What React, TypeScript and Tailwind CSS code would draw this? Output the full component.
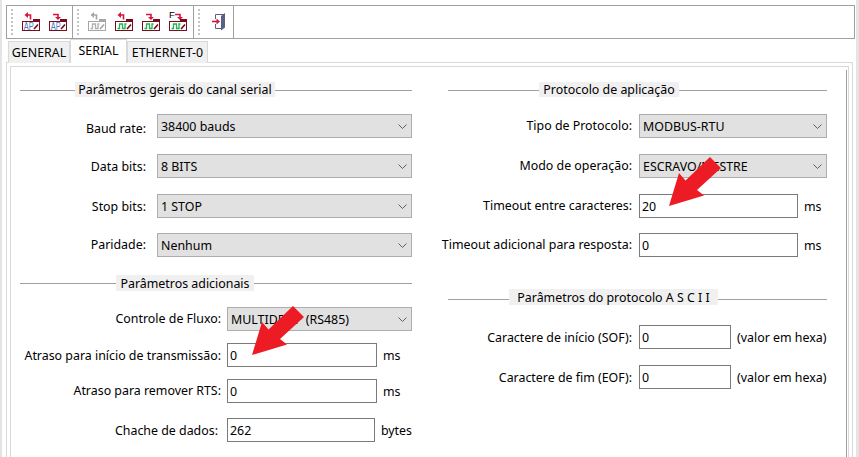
import React from 'react';

const RED = '#d8143c';
const MAROON = '#7a0a1e';

const Grip: React.FC = () => (
  <div className="flex flex-col gap-[2px] ml-[4px] w-[2px]">
    {Array.from({ length: 7 }).map((_, i) => (
      <div key={i} className="w-[2px] h-[2px] bg-[#c4c4c4]" />
    ))}
  </div>
);

const ToolIcon: React.FC<{ dir: 'in' | 'out'; kind: 'ap' | 'wave'; muted?: boolean; f?: boolean }> = ({ dir, kind, muted, f }) => {
  const line = muted ? '#a6a6a6' : MAROON;
  const arrow = muted ? '#a6a6a6' : RED;
  const dx = f ? 2 : 0;
  return (
    <svg width="27" height="24" viewBox="0 0 27 24" className="shrink-0">
      {f && (
        <text x="4" y="8" fontSize="9.5" fontFamily="Liberation Sans, sans-serif" fill="#000">F</text>
      )}
      {dir === 'in' ? (
        <g>
          <path d={`M${12.5 + dx} 9.5 V5 H${9 + dx}`} fill="none" stroke={arrow} strokeWidth="1.6" />
          <path d={`M${10 + dx} 2 L${6.5 + dx} 5 L${10 + dx} 8 Z`} fill={arrow} />
        </g>
      ) : (
        <g>
          <path d={`M${8 + dx} 4.5 H${13 + dx} V8`} fill="none" stroke={arrow} strokeWidth="1.6" />
          <path d={`M${10 + dx} 7 L${13 + dx} 10 L${16 + dx} 7 Z`} fill={arrow} />
        </g>
      )}
      <rect x="15" y="9" width="7" height="3" fill={line} />
      <rect x="4.5" y="11.5" width="17" height="9" fill="#fff" stroke={line} />
      {kind === 'ap' ? (
        <text x="5.8" y="19.8" fontSize="10" textLength="10" lengthAdjust="spacingAndGlyphs" fontFamily="Liberation Sans, sans-serif" fill="#4f78b8">AP</text>
      ) : (
        <path d="M6.5 18.5 H8.5 V14 H11.5 V18.5 H14 V14 H15.5" fill="none" stroke={muted ? '#b0b0b0' : '#22b14c'} strokeWidth="1.3" />
      )}
      <path d="M16 19 L20 14.5" stroke={line} strokeWidth="1.7" />
    </svg>
  );
};

const DoorIcon: React.FC = () => (
  <svg width="27" height="24" viewBox="0 0 27 24" className="shrink-0 ml-[5px]">
    <path d="M10.5 9 V4.5 H19 M10.5 14 V18.5 H16" fill="none" stroke="#5a5f86" />
    <polygon points="16,6 20,3 20,17.5 16,20.5" fill="#5a5f86" />
    <path d="M7 11.5 H12" stroke={RED} strokeWidth="1.6" />
    <path d="M11.5 8.5 L15 11.5 L11.5 14.5 Z" fill={RED} />
  </svg>
);

const SectionTitle: React.FC<{ title: string; leadClass: string; labelClass: string; lineClass?: string }> = ({ title, leadClass, labelClass, lineClass = 'translate-y-[1px]' }) => (
  <div className="flex items-center">
    <div className={`h-px bg-[#a0a0a0] ${leadClass} ${lineClass}`} />
    <div className={`bg-[#f0f0f0] flex justify-center items-center whitespace-nowrap pt-[2px] ${labelClass}`}>{title}</div>
    <div className={`h-px bg-[#a0a0a0] flex-1 ${lineClass}`} />
  </div>
);

const Row: React.FC<{ label: string; labelClass: string; className?: string; children: React.ReactNode; labelShift?: string }> = ({ label, labelClass, className = '', children, labelShift = '' }) => (
  <div className={`flex items-center h-6 ${className}`}>
    <div className={`flex justify-end whitespace-nowrap shrink-0 pt-[2px] ${labelClass} ${labelShift}`}>{label}</div>
    {children}
  </div>
);

const Combo: React.FC<{ value: string; className: string }> = ({ value, className }) => (
  <div className={`h-6 bg-[#e1e1e1] border border-[#adadad] flex items-center justify-between pl-[3px] pr-[4px] whitespace-nowrap ${className}`}>
    <span className="pt-[2px]">{value}</span>
    <svg width="9" height="5" viewBox="0 0 9 5">
      <path d="M0.5 0.5 L4.5 4.5 L8.5 0.5" fill="none" stroke="#606060" />
    </svg>
  </div>
);

const Field: React.FC<{ value: string; className: string }> = ({ value, className }) => (
  <div className={`h-6 bg-white border border-[#7a7a7a] flex items-center pl-[2px] pt-[2px] ${className}`}>{value}</div>
);

const Suffix: React.FC<{ text: string }> = ({ text }) => (
  <span className="ml-[6px] pt-[2px] whitespace-nowrap">{text}</span>
);

const Pointer: React.FC<{ className: string }> = ({ className }) => (
  <svg width="52" height="49" viewBox="0 0 52 49" className={`absolute ${className}`}>
    <polygon points="0,49 10,16 16.5,23.5 41,0 52,11 28,33 35,38.5" fill="#ed1c24" />
  </svg>
);

export default function App() {
  return (
    <div
      className="relative w-[859px] h-[457px] overflow-hidden bg-white text-black text-[12.4px] flex flex-col pt-[5px] pl-[6px] border-l-2 border-l-[#e4e4e4] border-r-[3px] border-r-[#e4e4e4]"
      style={{ fontFamily: '"Noto Sans", Tahoma, sans-serif' }}
    >
      {/* Toolbar */}
      <div className="-ml-[2px] w-[849px] h-[34px] border border-[#a0a0a0] flex shrink-0">
        <div className="w-[66px] h-full flex items-center border-r border-[#a0a0a0]">
          <Grip />
          <div className="flex ml-[5px]">
            <ToolIcon dir="in" kind="ap" />
            <ToolIcon dir="out" kind="ap" />
          </div>
        </div>
        <div className="w-[121px] h-full flex items-center border-r border-[#a0a0a0]">
          <Grip />
          <div className="flex ml-[5px]">
            <ToolIcon dir="in" kind="wave" muted />
            <ToolIcon dir="in" kind="wave" />
            <ToolIcon dir="out" kind="wave" />
            <ToolIcon dir="out" kind="wave" f />
          </div>
        </div>
        <div className="w-[40px] h-full flex items-center border-r border-[#a0a0a0]">
          <Grip />
          <DoorIcon />
        </div>
      </div>

      {/* Tabs */}
      <div className="flex items-end h-6 -mb-px relative z-10 shrink-0">
        <div className="w-[62px] h-[22px] bg-[#f0f0f0] border border-[#d9d9d9] border-b-0 flex items-center justify-center pt-[2px]">GENERAL</div>
        <div className="w-[57px] h-6 bg-white border border-[#d9d9d9] border-b-0 flex items-start pt-[2px] justify-center">SERIAL</div>
        <div className="w-[81px] h-[22px] bg-[#f0f0f0] border border-[#d9d9d9] border-b-0 flex items-center justify-center pt-[2px]">ETHERNET-0</div>
      </div>

      {/* Tab page */}
      <div className="-ml-[2px] w-[847px] flex-1 border border-b-0 border-[#d9d9d9] pt-[3px] px-[3px] flex flex-col min-h-0">
        <div className="flex-1 border border-b-0 border-[#d9d9d9] flex pl-[9px] min-h-0">
          {/* Left column */}
          <div className="w-[392px] shrink-0 pt-[15px]">
            <SectionTitle title="Parâmetros gerais do canal serial" leadClass="w-[55px]" labelClass="w-[200px] h-[15px]" />
            <Row label="Baud rate:" labelClass="w-[126px]" labelShift="translate-y-[2px]" className="mt-[17px]">
              <Combo value="38400 bauds" className="ml-[11px] w-[255px]" />
            </Row>
            <Row label="Data bits:" labelClass="w-[126px]" className="mt-4">
              <Combo value="8 BITS" className="ml-[11px] w-[255px]" />
            </Row>
            <Row label="Stop bits:" labelClass="w-[126px]" className="mt-4">
              <Combo value="1 STOP" className="ml-[11px] w-[255px]" />
            </Row>
            <Row label="Paridade:" labelClass="w-[126px]" labelShift="-translate-y-[1px]" className="mt-[15px]">
              <Combo value="Nenhum" className="ml-[11px] w-[255px]" />
            </Row>
            <div className="mt-[18px]">
              <SectionTitle title="Parâmetros adicionais" leadClass="w-[96px]" labelClass="w-[138px] h-4" lineClass="" />
            </div>
            <Row label="Controle de Fluxo:" labelClass="w-[201px]" labelShift="-translate-y-[1px]" className="mt-4">
              <Combo value="MULTIDROP (RS485)" className="ml-[6px] w-[185px]" />
            </Row>
            <Row label="Atraso para início de transmissão:" labelClass="w-[201px]" className="mt-3">
              <Field value="0" className="ml-[6px] w-[150px]" />
              <Suffix text="ms" />
            </Row>
            <Row label="Atraso para remover RTS:" labelClass="w-[201px]" labelShift="-translate-y-[1px]" className="mt-3">
              <Field value="0" className="ml-[6px] w-[150px]" />
              <Suffix text="ms" />
            </Row>
            <Row label="Chache de dados:" labelClass="w-[198px]" className="mt-[15px]">
              <Field value="262" className="ml-[9px] w-[149px]" />
              <Suffix text="bytes" />
            </Row>
          </div>

          {/* Right column */}
          <div className="w-[379px] shrink-0 ml-[36px] pt-[15px]">
            <SectionTitle title="Protocolo de aplicação" leadClass="w-[91px]" labelClass="w-[140px] h-[15px]" />
            <Row label="Tipo de Protocolo:" labelClass="w-[184px]" labelShift="-translate-y-[1px]" className="mt-[17px]">
              <Combo value="MODBUS-RTU" className="ml-[7px] w-[188px]" />
            </Row>
            <Row label="Modo de operação:" labelClass="w-[184px]" labelShift="-translate-y-[1px]" className="mt-4">
              <Combo value="ESCRAVO/MESTRE" className="ml-[7px] w-[188px]" />
            </Row>
            <Row label="Timeout entre caracteres:" labelClass="w-[184px]" labelShift="-translate-y-[1px]" className="mt-4">
              <Field value="20" className="ml-[7px] w-[159px]" />
              <Suffix text="ms" />
            </Row>
            <Row label="Timeout adicional para resposta:" labelClass="w-[184px]" labelShift="-translate-y-[1px]" className="mt-[15px]">
              <Field value="0" className="ml-[7px] w-[159px]" />
              <Suffix text="ms" />
            </Row>
            <div className="mt-8">
              <SectionTitle title="Parâmetros do protocolo A S C I I" leadClass="w-[61px]" labelClass="w-[209px] h-4" lineClass="translate-y-[2px]" />
            </div>
            <Row label="Caractere de início (SOF):" labelClass="w-[184px]" className="mt-5">
              <Field value="0" className="ml-[7px] w-[92px]" />
              <Suffix text="(valor em hexa)" />
            </Row>
            <Row label="Caractere de fim (EOF):" labelClass="w-[184px]" className="mt-4">
              <Field value="0" className="ml-[7px] w-[92px]" />
              <Suffix text="(valor em hexa)" />
            </Row>
          </div>

          <div className="w-px bg-[#a0a0a0] mt-[3px] ml-[19px]" />
        </div>
      </div>

      {/* Red callout arrows drawn over the form */}
      <Pointer className="left-[250px] top-[306px]" />
      <Pointer className="left-[667px] top-[157px]" />
    </div>
  );
}
